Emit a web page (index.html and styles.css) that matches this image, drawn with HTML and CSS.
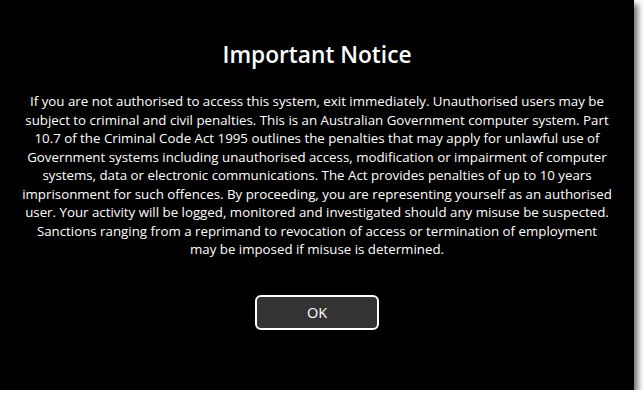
FILE: index.html
```html
<!DOCTYPE html>
<html>
<head>
<meta charset="utf-8">
<link rel="stylesheet" href="styles.css">
</head>
<body>
<div class="screen">
  <h1 class="title">Important Notice</h1>
  <p class="notice">
    <span class="line">If you are not authorised to access this system, exit immediately. Unauthorised users may be</span>
    <span class="line">subject to criminal and civil penalties. This is an Australian Government computer system. Part</span>
    <span class="line">10.7 of the Criminal Code Act 1995 outlines the penalties that may apply for unlawful use of</span>
    <span class="line">Government systems including unauthorised access, modification or impairment of computer</span>
    <span class="line">systems, data or electronic communications. The Act provides penalties of up to 10 years</span>
    <span class="line">imprisonment for such offences. By proceeding, you are representing yourself as an authorised</span>
    <span class="line">user. Your activity will be logged, monitored and investigated should any misuse be suspected.</span>
    <span class="line">Sanctions ranging from a reprimand to revocation of access or termination of employment</span>
    <span class="line">may be imposed if misuse is determined.</span>
  </p>
  <button class="ok">OK</button>
</div>
</body>
</html>
```
FILE: styles.css
```css
html, body {
  margin: 0;
  padding: 0;
  background: #ffffff;
}
.screen {
  width: 634px;
  height: 390px;
  background: #000000;
  box-shadow: 4px 4px 6px rgba(0, 0, 0, 0.55);
  display: flex;
  flex-direction: column;
  align-items: center;
  color: #ffffff;
  font-family: "Open Sans", "Noto Sans", sans-serif;
}
.title {
  margin: 40px 0 0 0;
  font-size: 22.7px;
  font-weight: 600;
  line-height: 30px;
}
.notice {
  margin: 22px 0 0 0;
  font-size: 13.3px;
  line-height: 18.5px;
  text-align: center;
  display: flex;
  flex-direction: column;
  align-items: center;
}
.line {
  white-space: nowrap;
}
.ok {
  margin-top: 36px;
  width: 124px;
  height: 35px;
  background: #333333;
  border: 2px solid #ffffff;
  border-radius: 6px;
  color: #ffffff;
  font-family: "Open Sans", "Noto Sans", sans-serif;
  font-size: 14.5px;
}
```
